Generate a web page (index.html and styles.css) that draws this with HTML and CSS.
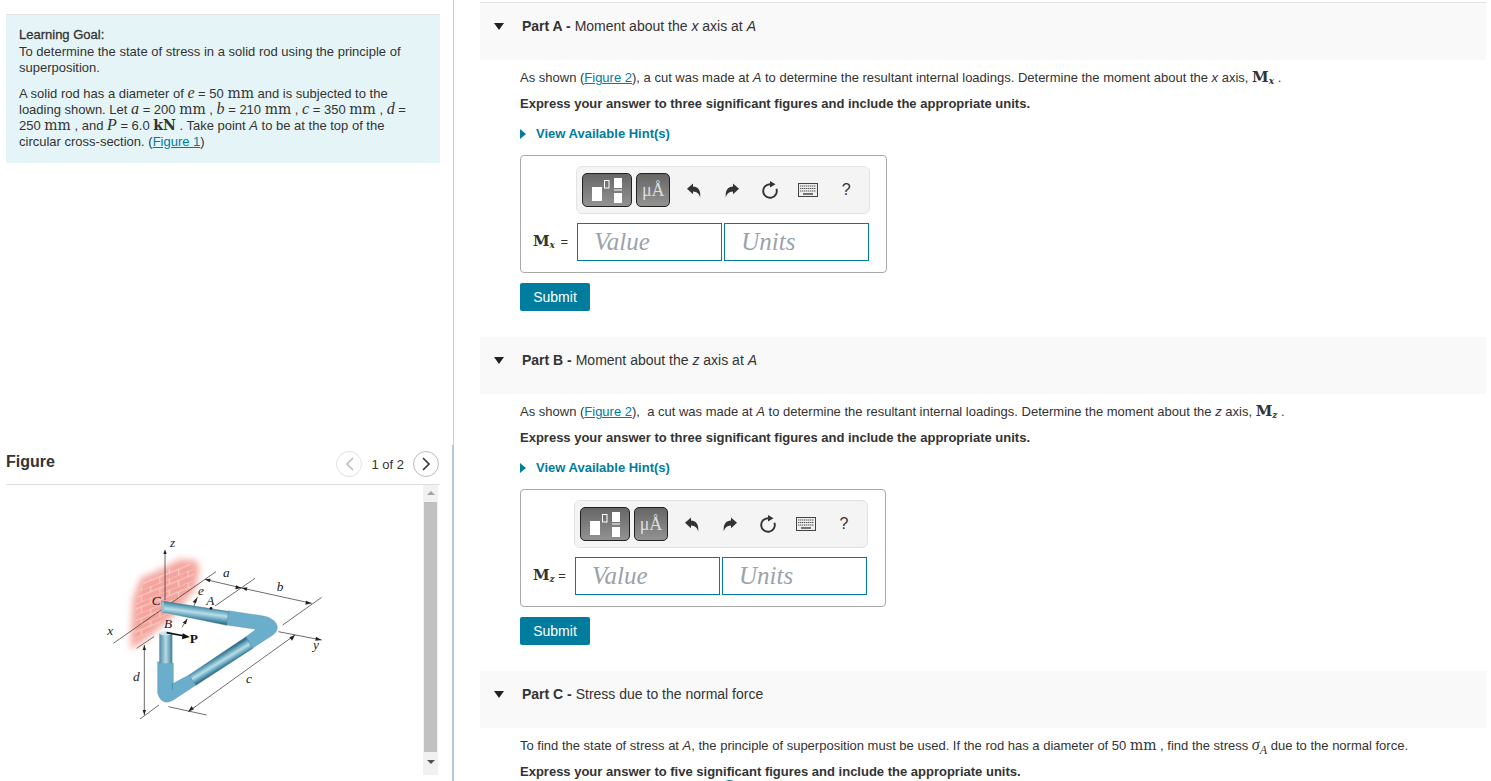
FILE: index.html
```html
<!DOCTYPE html>
<html lang="en">
<head>
  <meta charset="UTF-8">
  <meta name="viewport" content="width=device-width, initial-scale=1.0">
  <title>Learning Goal</title>
  <link rel="stylesheet" href="styles.css">
</head>
<body>
  <svg class="icon-defs" width="0" height="0" aria-hidden="true">
    <defs>
      <symbol id="icon-undo" viewBox="0 0 14 15">
        <path d="M0 5.8 6 0.5V3.6C10.8 3.8 14 7 13.2 14.5 12.2 10.8 10.2 8.6 6 8.4V11.2Z"/>
      </symbol>
      <symbol id="icon-reset" viewBox="0 0 18 18">
        <path d="M9 3.2A6.8 6.8 0 1 0 15.4 7.7" fill="none" stroke="#333" stroke-width="1.9"/>
        <path d="M9 0 14.5 3.2 9 6.4Z" fill="#333"/>
      </symbol>
      <symbol id="icon-keys" viewBox="0 0 20 14">
        <rect x="0.5" y="0.5" width="19" height="13" fill="#eee" stroke="#444"/>
        <path d="M2 3H18M2 5.5H18M2 8H18" stroke="#555" stroke-width="1.2" stroke-dasharray="1.4 0.6"/>
        <path d="M5 11H15" stroke="#555" stroke-width="1.6"/>
      </symbol>
      <symbol id="icon-templates" viewBox="0 0 30 25">
        <rect x="0" y="9" width="10" height="14" fill="#fff"/>
        <rect x="12.5" y="2.5" width="4.5" height="7.5" fill="none" stroke="#fff"/>
        <rect x="22" y="0" width="8" height="10" fill="#fff"/>
        <rect x="22" y="11.5" width="8" height="1" fill="#fff"/>
        <rect x="22" y="15" width="8" height="10" fill="#fff"/>
      </symbol>
    </defs>
  </svg>

  <div class="page">
    <aside class="left">
      <div class="left-top">
        <div class="goal">
          <p class="goal-intro"><strong>Learning Goal:</strong><br>To determine the state of stress in a solid rod using the principle of superposition.</p>
          <p class="goal-text">A solid rod has a diameter of <i class="mi">e</i> = 50 <span class="mr">mm</span> and is subjected to the loading shown. Let <i class="mi">a</i> = 200 <span class="mr">mm</span> , <i class="mi">b</i> = 210 <span class="mr">mm</span> , <i class="mi">c</i> = 350 <span class="mr">mm</span> , <i class="mi">d</i> = 250 <span class="mr">mm</span> , and <i class="mi">P</i> = 6.0 <span class="mr kn">kN</span> . Take point <i>A</i> to be at the top of the circular cross-section. (<a href="#">Figure 1</a>)</p>
        </div>
      </div>
      <div class="left-figure">
        <div class="figure-head">
          <h2>Figure</h2>
          <div class="pager">
            <span class="pager-btn off"><svg width="9" height="14" viewBox="0 0 9 14"><path d="M8 1 2 7l6 6" fill="none" stroke="#bbb" stroke-width="1.6"/></svg></span>
            <span class="pager-text">1 of 2</span>
            <span class="pager-btn"><svg width="9" height="14" viewBox="0 0 9 14"><path d="M1 1l6 6-6 6" fill="none" stroke="#333" stroke-width="1.6"/></svg></span>
          </div>
        </div>
        <div class="figure-body">
          <div class="figure-canvas">
            <svg class="rod" width="250" height="210" viewBox="0 0 750 630">
              <defs>
                <filter id="soft" x="-30%" y="-30%" width="160%" height="160%"><feGaussianBlur stdDeviation="11"/></filter>
                <filter id="soft-lines" x="-30%" y="-30%" width="160%" height="160%"><feGaussianBlur stdDeviation="1.5"/></filter>
                <pattern id="bricks" width="56" height="34" patternUnits="userSpaceOnUse" patternTransform="skewY(-22)">
                  <path d="M0 0H56M0 17H56M14 0V17M42 17V34" fill="none" stroke="#fff" stroke-width="2.2"/>
                </pattern>
                <linearGradient id="rod-a" gradientUnits="userSpaceOnUse" x1="318" y1="254" x2="312" y2="300">
                  <stop offset="0" stop-color="#356f88"/>
                  <stop offset="0.2" stop-color="#5fa0b8"/>
                  <stop offset="0.5" stop-color="#b8deea"/>
                  <stop offset="0.8" stop-color="#5fa0b8"/>
                  <stop offset="1" stop-color="#356f88"/>
                </linearGradient>
                <linearGradient id="rod-b" gradientUnits="userSpaceOnUse" x1="382" y1="408" x2="402" y2="441">
                  <stop offset="0" stop-color="#356f88"/>
                  <stop offset="0.2" stop-color="#5fa0b8"/>
                  <stop offset="0.5" stop-color="#b8deea"/>
                  <stop offset="0.8" stop-color="#5fa0b8"/>
                  <stop offset="1" stop-color="#356f88"/>
                </linearGradient>
                <linearGradient id="rod-c" x1="0" y1="0" x2="1" y2="0">
                  <stop offset="0" stop-color="#4a8aa3"/>
                  <stop offset="0.5" stop-color="#b5dbe6"/>
                  <stop offset="1" stop-color="#3d7d96"/>
                </linearGradient>
              </defs>
              <path d="M122 390 128 240 152 175 205 152 270 118 320 122 328 150 316 205 250 288 180 348Z" fill="#f4a49c" filter="url(#soft)"/>
              <path d="M134 370 138 240 160 186 205 164 270 132 308 134 314 150 302 205 246 276 180 334Z" fill="url(#bricks)" filter="url(#soft-lines)" opacity="0.7"/>

              <g fill="none" stroke="#222" stroke-width="2">
                <path d="M225 240V95"/>
                <path d="M70 370 378 155"/>
                <path d="M375 258 495 175"/>
                <path d="M578 315 695 232"/>
                <path d="M345 178 455 204 665 250"/>
                <path d="M565 335 695 360"/>
                <path d="M295 575 615 345"/>
                <path d="M235 560 350 585"/>
                <path d="M163 375V585"/>
                <path d="M150 597 207 555"/>
                <path d="M140 385 192 350"/>
                <path d="M312 258 322 232"/>
                <path d="M276 322 292 296"/>
              </g>
              <g fill="#222">
                <path d="M225 88 220 102H230Z"/>
                <path d="M345 178 362 176 359 187Z"/>
                <path d="M455 204 438 196 436 208Z"/>
                <path d="M455 204 472 202 470 213Z"/>
                <path d="M665 250 648 242 646 254Z"/>
                <path d="M695 360 678 350 676 362Z"/>
                <path d="M615 345 598 352 606 362Z"/>
                <path d="M295 575 312 568 304 558Z"/>
                <path d="M163 375 158 390H168Z"/>
                <path d="M163 585 158 570H168Z"/>
                <path d="M322 232 308 246 318 250Z"/>
                <path d="M292 296 278 308 288 313Z"/>
              </g>

              <path d="M415 272 520 288C558 296 574 322 552 342 542 350 534 354 525 360L486 386 468 350 498 328 410 315Z" fill="#6aaecb" stroke="#3f7f98"/>
              <path d="M215 243 415 274 410 316 215 276Z" fill="url(#rod-a)" stroke="#356f88"/>
              <ellipse cx="218" cy="260" rx="5" ry="17" fill="#8fc3d5"/>
              <path d="M297 465 318 495 250 540Q215 560 203 520V425L250 430V490Z" fill="#6aaecb" stroke="#3f7f98"/>
              <path d="M468 350 487 386 318 496 297 465Z" fill="url(#rod-b)" stroke="#356f88"/>
              <path d="M247 490V510" stroke="#3f7f98" stroke-width="2"/>
              <path d="M208 340H247V430H208Z" fill="url(#rod-c)"/>
              <ellipse cx="227" cy="340" rx="19" ry="6" fill="#cfe6ee"/>
              <circle cx="363" cy="265" r="4" fill="#111"/>
              <path d="M230 338 284 348" stroke="#111" stroke-width="5"/>
              <path d="M300 351 278 340 276 358Z" fill="#111"/>

              <g class="fig-label">
                <text x="240" y="80">z</text>
                <text x="399" y="172">a</text>
                <text x="324" y="224">e</text>
                <text x="560" y="212">b</text>
                <text x="52" y="346">x</text>
                <text x="669" y="388">y</text>
                <text x="129" y="482">d</text>
                <text x="468" y="488">c</text>
                <text x="185" y="256">C</text>
                <text x="222" y="325">B</text>
                <text x="349" y="254">A</text>
              </g>
              <text class="fig-bold" x="299" y="368">P</text>
            </svg>
          </div>
          <div class="scrollbar">
            <span class="scroll-up"></span>
            <span class="scroll-thumb"></span>
            <span class="scroll-down"></span>
          </div>
        </div>
      </div>
    </aside>

    <main class="right">
      <section class="part">
        <div class="part-head"><span class="caret"></span><span><b>Part A -</b> Moment about the <i>x</i> axis at <i>A</i></span></div>
        <div class="part-body">
          <p>As shown (<a href="#">Figure 2</a>), a cut was made at <i>A</i> to determine the resultant internal loadings. Determine the moment about the <i>x</i> axis, <b class="mb">M<sub>x</sub></b> .</p>
          <p class="express">Express your answer to three significant figures and include the appropriate units.</p>
          <div class="hints"><span class="hint-caret"></span>View Available Hint(s)</div>
          <div class="answer">
            <div class="toolbar">
              <span class="tool-btn wide"><svg width="30" height="25"><use href="#icon-templates"/></svg></span>
              <span class="tool-btn unit">μÅ</span>
              <span class="tools">
                <svg class="tool" width="14" height="15"><use href="#icon-undo"/></svg>
                <svg class="tool flip" width="14" height="15"><use href="#icon-undo"/></svg>
                <svg class="tool" width="18" height="18"><use href="#icon-reset"/></svg>
                <svg class="tool" width="20" height="14"><use href="#icon-keys"/></svg>
                <span class="tool-help">?</span>
              </span>
            </div>
            <div class="answer-row">
              <span class="answer-label wide-sub"><b class="mb">M<sub>x</sub></b> =</span>
              <input class="field" placeholder="Value">
              <input class="field" placeholder="Units">
            </div>
          </div>
          <button class="submit" type="button">Submit</button>
        </div>
      </section>

      <section class="part">
        <div class="part-head"><span class="caret"></span><span><b>Part B -</b> Moment about the <i>z</i> axis at <i>A</i></span></div>
        <div class="part-body">
          <p>As shown (<a href="#">Figure 2</a>),&nbsp; a cut was made at <i>A</i> to determine the resultant internal loadings. Determine the moment about the <i>z</i> axis, <b class="mb">M<sub>z</sub></b> .</p>
          <p class="express">Express your answer to three significant figures and include the appropriate units.</p>
          <div class="hints"><span class="hint-caret"></span>View Available Hint(s)</div>
          <div class="answer answer-z">
            <div class="toolbar">
              <span class="tool-btn wide"><svg width="30" height="25"><use href="#icon-templates"/></svg></span>
              <span class="tool-btn unit">μÅ</span>
              <span class="tools">
                <svg class="tool" width="14" height="15"><use href="#icon-undo"/></svg>
                <svg class="tool flip" width="14" height="15"><use href="#icon-undo"/></svg>
                <svg class="tool" width="18" height="18"><use href="#icon-reset"/></svg>
                <svg class="tool" width="20" height="14"><use href="#icon-keys"/></svg>
                <span class="tool-help">?</span>
              </span>
            </div>
            <div class="answer-row">
              <span class="answer-label"><b class="mb">M<sub>z</sub></b> =</span>
              <input class="field" placeholder="Value">
              <input class="field" placeholder="Units">
            </div>
          </div>
          <button class="submit" type="button">Submit</button>
        </div>
      </section>

      <section class="part">
        <div class="part-head"><span class="caret"></span><span><b>Part C -</b> Stress due to the normal force</span></div>
        <div class="part-body">
          <p>To find the state of stress at <i>A</i>, the principle of superposition must be used. If the rod has a diameter of 50 <span class="mr">mm</span> , find the stress <i class="mi">σ<sub>A</sub></i> due to the normal force.</p>
          <p class="express">Express your answer to five significant figures and include the appropriate units.</p>
          <span class="help-dot"></span>
        </div>
      </section>
    </main>
  </div>
</body>
</html>
```

FILE: styles.css
```css
html, body {
  height: 100%;
  margin: 0;
  overflow: hidden;
}
body {
  background: #fff;
  font-family: "Liberation Sans", Arial, sans-serif;
  font-size: 13px;
  color: #333;
}
p {
  margin: 0;
}
a {
  color: #007c9e;
  text-decoration: underline;
}
.icon-defs {
  position: absolute;
}
.page {
  display: flex;
  height: 781px;
}

/* left column */
.left {
  display: flex;
  flex-direction: column;
  flex: none;
  width: 454px;
}
.left-top {
  flex: none;
  height: 445px;
  padding: 14px 0 0 6px;
  box-sizing: border-box;
  border-right: 1px solid #c8d0da;
}
.goal {
  width: 434px;
  height: 149px;
  box-sizing: border-box;
  padding: 12px 25px 0 13px;
  background: #e5f5f7;
  border-top: 1px solid #dfe3e5;
}
.goal-intro {
  line-height: 16.5px;
}
.goal-text {
  margin-top: 9px;
  line-height: 16px;
}
.goal strong {
  font-weight: normal;
  -webkit-text-stroke: 0.3px #333;
}
.mi {
  font-family: "Liberation Serif", serif;
  font-size: 16px;
  line-height: 0;
}
.mr {
  font-family: "DejaVu Serif", serif;
  font-size: 14px;
  line-height: 0;
}
.kn {
  font-weight: bold;
}
.mb {
  font-family: "DejaVu Serif", serif;
  font-size: 15px;
  font-weight: bold;
  line-height: 0;
}
.mb sub {
  font-size: 9px;
  font-style: italic;
  line-height: 0;
  vertical-align: -2px;
}
.mi sub {
  font-size: 12px;
  line-height: 0;
}
.left-figure {
  flex: 1;
  padding-left: 6px;
  border-right: 2px solid #b5c9dd;
  min-height: 0;
}
.figure-head {
  display: flex;
  align-items: center;
  justify-content: space-between;
  width: 434px;
  height: 40px;
  box-sizing: border-box;
  border-bottom: 1px solid #ddd;
}
.figure-head h2 {
  margin: 0 0 6px;
  font-size: 16px;
  font-weight: bold;
}
.pager {
  display: flex;
  align-items: center;
  gap: 9px;
  margin-right: 1px;
  margin-bottom: 1px;
}
.pager-btn {
  display: flex;
  align-items: center;
  justify-content: center;
  width: 24px;
  height: 24px;
  border: 1px solid #bbb;
  border-radius: 50%;
}
.pager-btn.off {
  border-color: #e2e2e2;
}
.figure-body {
  display: flex;
  width: 434px;
  height: 290px;
}
.figure-canvas {
  flex: 1;
  padding: 35px 0 0 84px;
}
.rod {
  display: block;
}
.fig-label text {
  font-family: "Liberation Serif", serif;
  font-style: italic;
  font-size: 40px;
  fill: #222;
}
.fig-bold {
  font-family: "Liberation Serif", serif;
  font-weight: bold;
  font-size: 40px;
  fill: #111;
}
.scrollbar {
  display: flex;
  flex-direction: column;
  align-items: center;
  flex: none;
  width: 15px;
  margin-right: 2px;
  background: #f1f1f1;
}
.scroll-up, .scroll-down {
  flex: none;
  width: 0;
  height: 0;
  border-left: 4px solid transparent;
  border-right: 4px solid transparent;
}
.scroll-up {
  margin: 6px 0 7px;
  border-bottom: 4px solid #a3a3a3;
}
.scroll-down {
  margin: 8px 0 0;
  border-top: 4px solid #505050;
}
.scroll-thumb {
  flex: none;
  width: 13px;
  height: 250px;
  background: #c1c1c1;
}

/* right column */
.right {
  flex: 1;
  min-width: 0;
  padding: 2px 5px 0 26px;
}
.part {
  margin-bottom: 25px;
}
.part-head {
  display: flex;
  align-items: flex-start;
  height: 58px;
  box-sizing: border-box;
  padding: 13px 0 0 14px;
  background: #f9f9f9;
  border-top: 1px solid #e2e2e2;
  font-size: 14px;
  line-height: 20px;
}
.part + .part .part-head {
  border-top-color: #fff;
}
.caret {
  flex: none;
  width: 0;
  height: 0;
  margin: 7px 18px 0 0;
  border-left: 5.5px solid transparent;
  border-right: 5.5px solid transparent;
  border-top: 7px solid #222;
}
.part-head b {
  font-weight: bold;
}
.part-body {
  padding: 8px 0 0 40px;
  line-height: 20px;
}
.express {
  margin-top: 6px;
  font-weight: bold;
}
.hints {
  display: flex;
  align-items: center;
  margin-top: 10px;
  color: #007c9e;
  font-weight: bold;
}
.hint-caret {
  flex: none;
  width: 0;
  height: 0;
  margin-right: 10px;
  border-top: 5px solid transparent;
  border-bottom: 5px solid transparent;
  border-left: 6px solid #007c9e;
}
.help-dot {
  display: block;
  width: 11px;
  height: 11px;
  margin: -2px 0 0 202px;
  border: 2px solid #007c9e;
  border-radius: 50%;
}
.answer {
  display: flex;
  flex-direction: column;
  width: fit-content;
  box-sizing: border-box;
  height: 118px;
  margin-top: 11px;
  padding: 10px 17px 0 12px;
  border: 1px solid #aaa;
  border-radius: 4px;
}
.answer-z {
  padding-right: 18px;
}
.toolbar {
  display: flex;
  align-items: center;
  align-self: flex-end;
  box-sizing: border-box;
  width: 294px;
  height: 48px;
  margin-right: -1px;
  padding-left: 5px;
  background: #f4f4f4;
  border: 1px solid #e3e3e3;
  border-radius: 6px;
}
.tool-btn {
  display: flex;
  align-items: center;
  justify-content: center;
  box-sizing: border-box;
  height: 34px;
  border: 1px solid #222;
  border-radius: 5px;
  background: linear-gradient(#666, #929292);
}
.tool-btn.wide {
  width: 50px;
}
.tool-btn.unit {
  width: 34px;
  margin-left: 4px;
  font-family: "Liberation Serif", serif;
  font-size: 18px;
  color: #ddd;
}
.tools {
  display: grid;
  grid-template-columns: repeat(5, 38px);
  align-items: center;
  justify-items: center;
  padding-left: 5px;
}
.tool {
  fill: #333;
}
.tool.flip {
  transform: scaleX(-1);
}
.tool-help {
  font-size: 16px;
  color: #333;
}
.answer-row {
  display: flex;
  align-items: center;
  margin-top: 9px;
}
.answer-label {
  margin-right: 9px;
  white-space: nowrap;
}
.answer-label.wide-sub .mb sub {
  margin-right: 2px;
}
.field {
  width: 145px;
  height: 38px;
  box-sizing: border-box;
  padding: 0 16px;
  border: 1px solid #007c9e;
  border-radius: 0;
  outline: none;
  font-family: "Liberation Serif", serif;
  font-style: italic;
  font-size: 25px;
  background: #fff;
}
.field + .field {
  margin-left: 2px;
}
.field::placeholder {
  color: #9aa3aa;
  opacity: 1;
}
.submit {
  display: block;
  width: 70px;
  height: 28px;
  margin-top: 10px;
  padding: 0;
  border: none;
  border-radius: 2px;
  background: #007c9e;
  color: #fff;
  font-family: "Liberation Sans", Arial, sans-serif;
  font-size: 14px;
  cursor: pointer;
}
```
